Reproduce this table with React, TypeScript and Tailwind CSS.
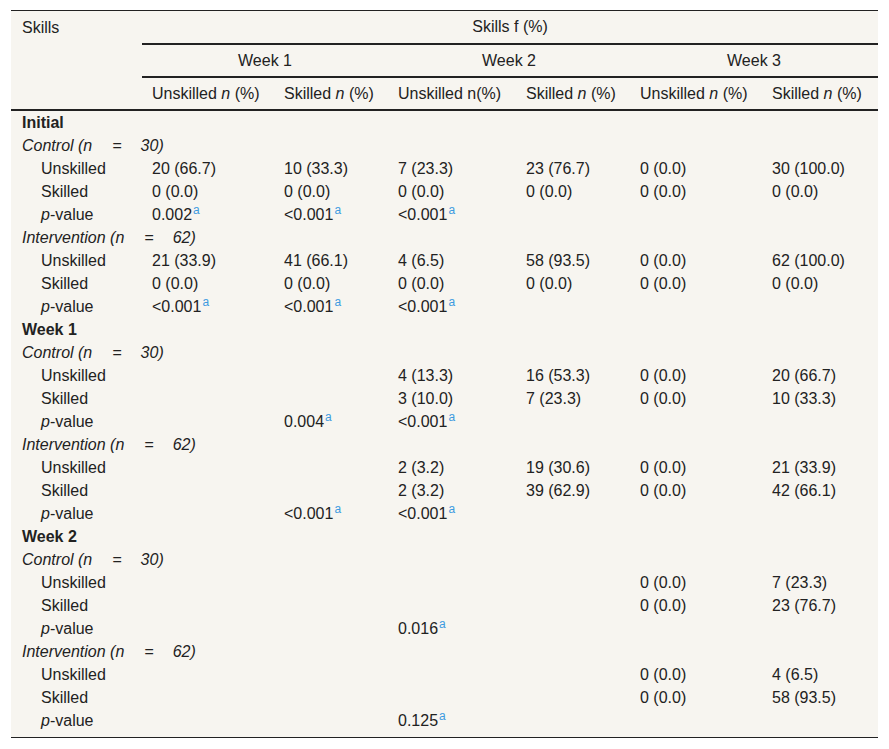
import React from "react";

type Cell = string;

const Sup = () => (
  <span className="relative top-[-6px] ml-[1px] text-[12px] text-[#3d9be0]">a</span>
);

function renderVal(v: Cell) {
  if (v.endsWith("^")) {
    return (
      <>
        {v.slice(0, -1)}
        <Sup />
      </>
    );
  }
  return v;
}

type Row =
  | { kind: "section"; label: string }
  | { kind: "group"; label: string; n: string }
  | { kind: "data"; label: "Unskilled" | "Skilled" | "p"; vals: Cell[] };

const block = (
  c: { u: Cell[]; s: Cell[]; p: Cell[] },
  i: { u: Cell[]; s: Cell[]; p: Cell[] }
): Row[] => [
  { kind: "group", label: "Control", n: "30)" },
  { kind: "data", label: "Unskilled", vals: c.u },
  { kind: "data", label: "Skilled", vals: c.s },
  { kind: "data", label: "p", vals: c.p },
  { kind: "group", label: "Intervention", n: "62)" },
  { kind: "data", label: "Unskilled", vals: i.u },
  { kind: "data", label: "Skilled", vals: i.s },
  { kind: "data", label: "p", vals: i.p },
];

const z = "0 (0.0)";

const rows: Row[] = [
  { kind: "section", label: "Initial" },
  ...block(
    {
      u: ["20 (66.7)", "10 (33.3)", "7 (23.3)", "23 (76.7)", z, "30 (100.0)"],
      s: [z, z, z, z, z, z],
      p: ["0.002^", "<0.001^", "<0.001^", "", "", ""],
    },
    {
      u: ["21 (33.9)", "41 (66.1)", "4 (6.5)", "58 (93.5)", z, "62 (100.0)"],
      s: [z, z, z, z, z, z],
      p: ["<0.001^", "<0.001^", "<0.001^", "", "", ""],
    }
  ),
  { kind: "section", label: "Week 1" },
  ...block(
    {
      u: ["", "", "4 (13.3)", "16 (53.3)", z, "20 (66.7)"],
      s: ["", "", "3 (10.0)", "7 (23.3)", z, "10 (33.3)"],
      p: ["", "0.004^", "<0.001^", "", "", ""],
    },
    {
      u: ["", "", "2 (3.2)", "19 (30.6)", z, "21 (33.9)"],
      s: ["", "", "2 (3.2)", "39 (62.9)", z, "42 (66.1)"],
      p: ["", "<0.001^", "<0.001^", "", "", ""],
    }
  ),
  { kind: "section", label: "Week 2" },
  ...block(
    {
      u: ["", "", "", "", z, "7 (23.3)"],
      s: ["", "", "", "", z, "23 (76.7)"],
      p: ["", "", "0.016^", "", "", ""],
    },
    {
      u: ["", "", "", "", z, "4 (6.5)"],
      s: ["", "", "", "", z, "58 (93.5)"],
      p: ["", "", "0.125^", "", "", ""],
    }
  ),
];

const gridCols =
  "grid grid-cols-[131px_132px_114px_128px_114px_132px_116px]";

export default function App() {
  return (
    <div
      className="bg-white w-[889px] h-[749px] pt-[10px] pl-[11px] text-[16px] text-[#222] leading-none"
      style={{ fontFamily: '"Liberation Sans", Arial, sans-serif' }}
    >
      <div className="w-[867px] bg-[#f7f5f0] border-t border-b border-[#222] pb-[5px]">
        {/* Header */}
        <div className={gridCols}>
          <div className="row-span-3 pl-[11px] pt-[9px] border-b-2 border-[#222]">
            Skills
          </div>
          <div className="col-span-6 h-[34px] border-b-2 border-[#222] flex items-center justify-center">
            <span>Skills f (%)</span>
          </div>
          <div className="col-span-2 h-[33px] border-b-2 border-[#222] flex items-center justify-center">
            <span>Week 1</span>
          </div>
          <div className="col-span-2 h-[33px] border-b-2 border-[#222] flex items-center justify-center">
            <span>Week 2</span>
          </div>
          <div className="col-span-2 h-[33px] border-b-2 border-[#222] flex items-center justify-center">
            <span>Week 3</span>
          </div>
          {[
            <>Unskilled <i>n</i> (%)</>,
            <>Skilled <i>n</i> (%)</>,
            <>Unskilled n(%)</>,
            <>Skilled <i>n</i> (%)</>,
            <>Unskilled <i>n</i> (%)</>,
            <>Skilled <i>n</i> (%)</>,
          ].map((h, k) => (
            <div
              key={k}
              className="h-[33px] border-b-2 border-[#222] flex items-center pl-[10px] whitespace-nowrap"
            >
              <span>{h}</span>
            </div>
          ))}
        </div>
        {/* Body */}
        <div className={gridCols}>
          {rows.map((r, idx) => {
            if (r.kind === "section") {
              return (
                <div
                  key={idx}
                  className="col-span-7 h-[23px] flex items-center pl-[11px] font-bold"
                >
                  <span>{r.label}</span>
                </div>
              );
            }
            if (r.kind === "group") {
              return (
                <div
                  key={idx}
                  className="col-span-7 h-[23px] flex items-center pl-[11px] italic whitespace-pre"
                >
                  <span>{r.label} (n</span>
                  <span className="ml-[20px]">=</span>
                  <span className="ml-[19px]">{r.n}</span>
                </div>
              );
            }
            return (
              <React.Fragment key={idx}>
                <div className="h-[23px] flex items-center pl-[30px] whitespace-nowrap">
                  <span>
                    {r.label === "p" ? (
                      <>
                        <i>p</i>-value
                      </>
                    ) : (
                      r.label
                    )}
                  </span>
                </div>
                {r.vals.map((v, k) => (
                  <div
                    key={k}
                    className="h-[23px] flex items-center pl-[10px] whitespace-nowrap"
                  >
                    <span>{renderVal(v)}</span>
                  </div>
                ))}
              </React.Fragment>
            );
          })}
        </div>
      </div>
    </div>
  );
}
